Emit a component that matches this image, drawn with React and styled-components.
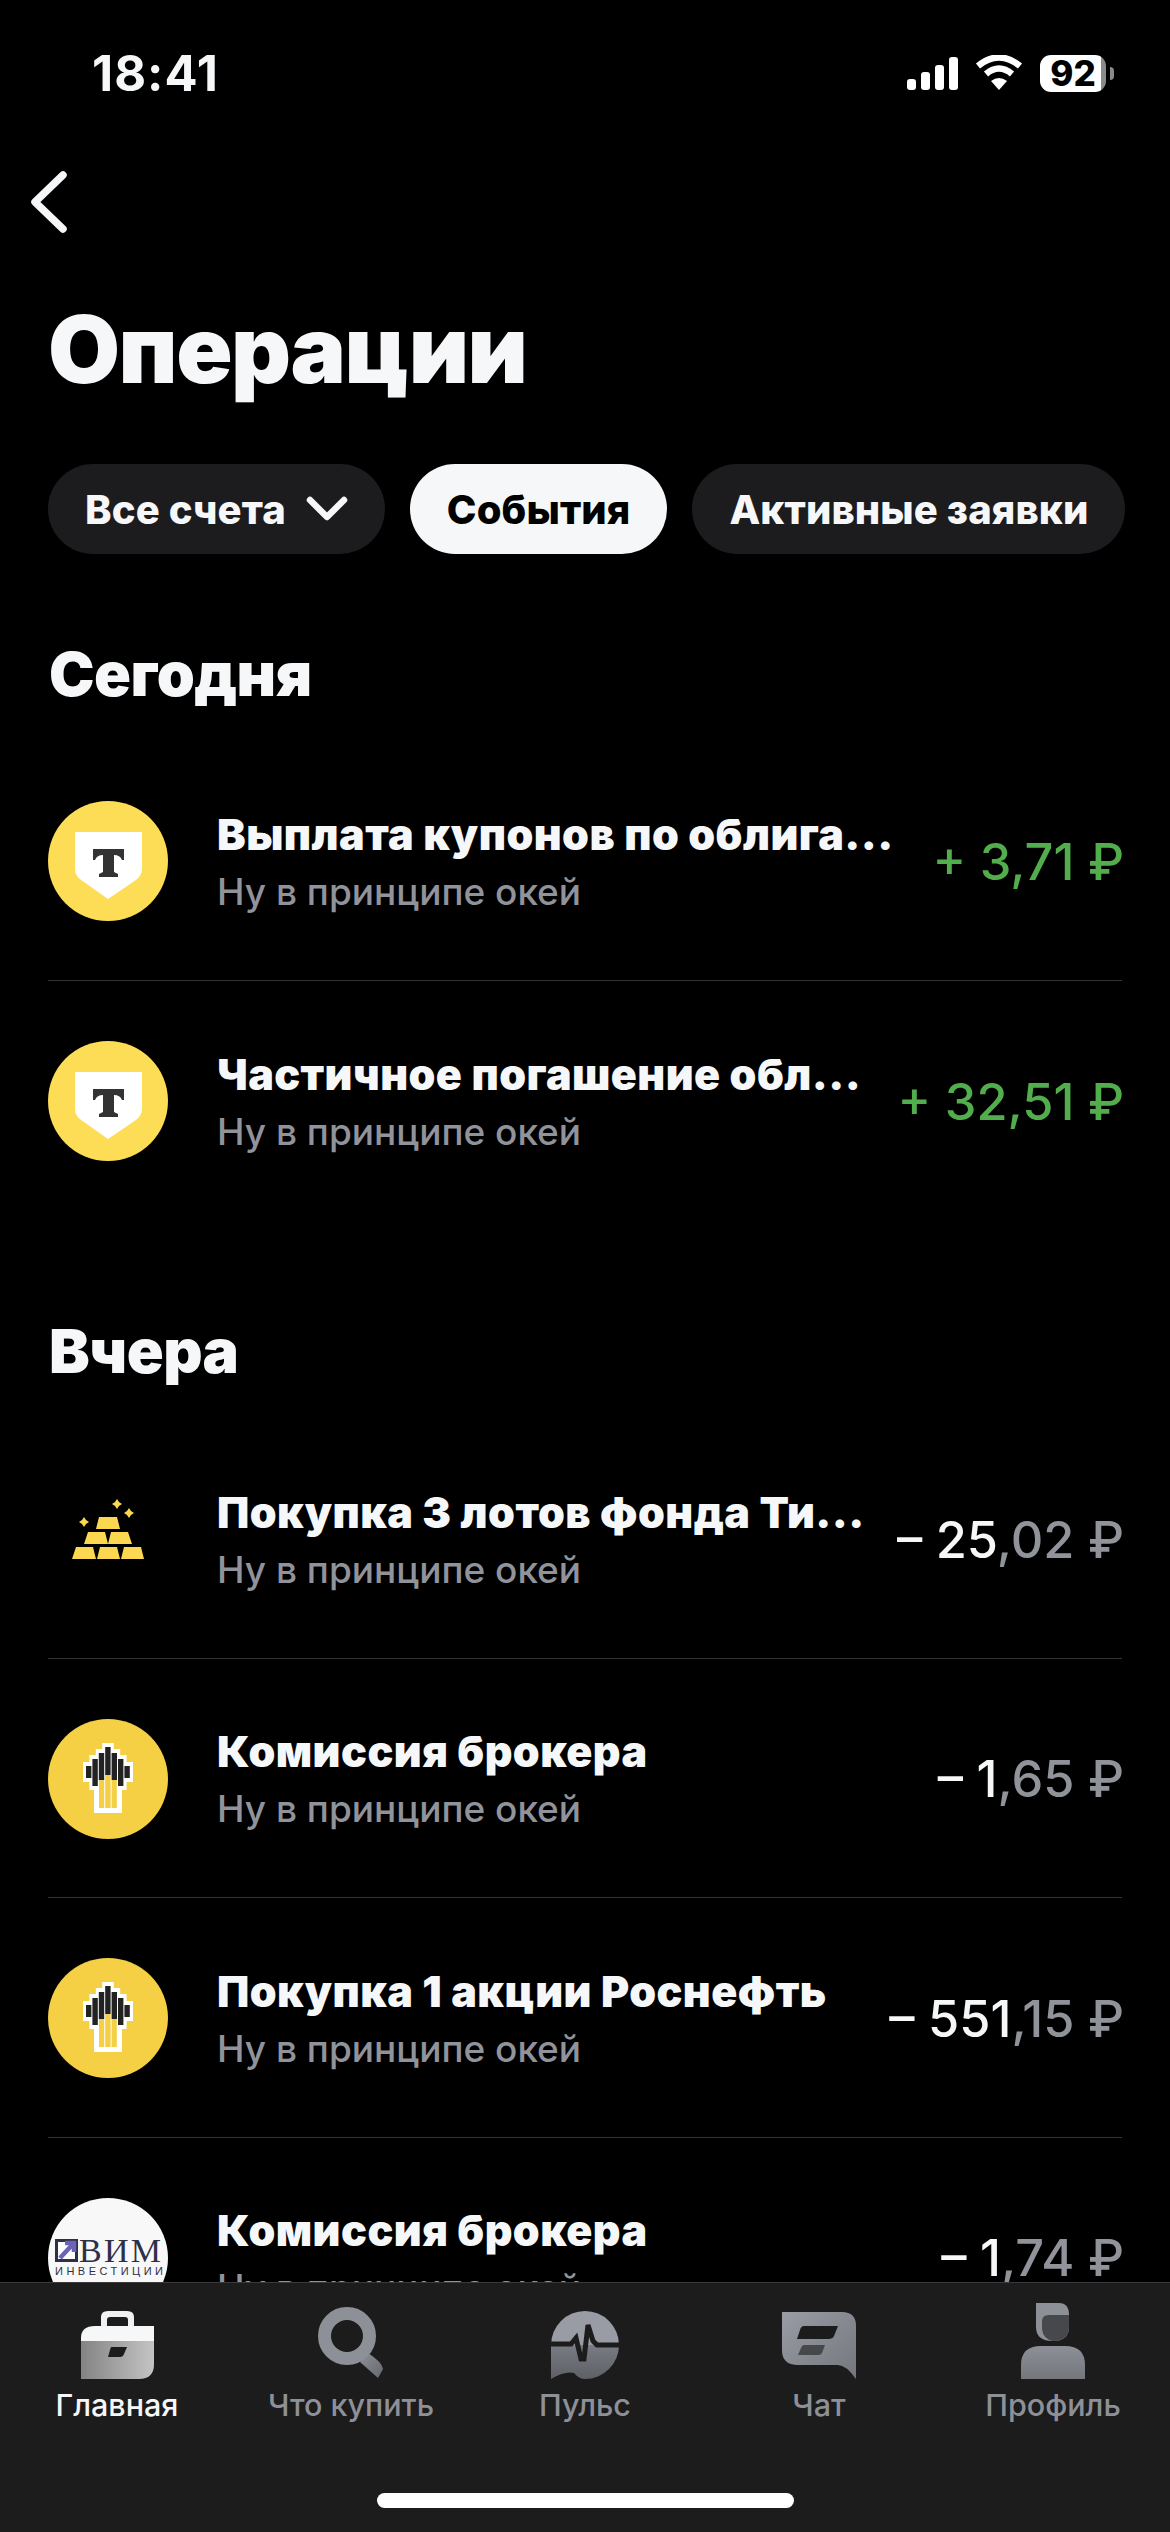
import React from 'react';
import styled, { createGlobalStyle } from 'styled-components';

const Global = createGlobalStyle`
  html, body {
    background: #000;
    margin: 0;
    padding: 0;
  }
`;

const Page = styled.div`
  background: #000;
  color: #f6f7f8;
  font-family: Inter, "Noto Sans", sans-serif;
  height: 2532px;
  overflow: hidden;
  position: relative;
  width: 1170px;
`;

const StatusBar = styled.div`
  align-items: center;
  display: flex;
  height: 146px;
  justify-content: space-between;
  padding: 0 64px 0 92px;
  box-sizing: border-box;
`;

const Time = styled.div`
  font-size: 49px;
  font-weight: 700;
  letter-spacing: 1px;
`;

const StatusIcons = styled.div`
  align-items: center;
  display: flex;
  gap: 17px;
`;

const Battery = styled.div`
  align-items: center;
  background: linear-gradient(90deg, #fff 93%, #8a8a8a 93%);
  border-radius: 11px;
  color: #000;
  display: flex;
  font-size: 35px;
  font-weight: 800;
  height: 37px;
  justify-content: center;
  position: relative;
  width: 66px;

  &::after {
    background: #8a8a8a;
    border-radius: 0 4px 4px 0;
    content: '';
    height: 13px;
    position: absolute;
    right: -8px;
    top: 12px;
    width: 4px;
  }
`;

const BackButton = styled.div`
  height: 64px;
  margin-left: 29px;
  margin-top: 24px;
  width: 40px;
`;

const Title = styled.h1`
  font-size: 93px;
  font-weight: 900;
  letter-spacing: -1.5px;
  line-height: 100px;
  margin: 65px 0 0 48px;
`;

const Pills = styled.div`
  display: flex;
  gap: 25px;
  margin: 65px 0 0 48px;
`;

const Pill = styled.div`
  align-items: center;
  background: ${({ $active }) => ($active ? '#f6f7f8' : '#1c1c1e')};
  border-radius: 45px;
  color: ${({ $active }) => ($active ? '#000' : '#f6f7f8')};
  display: flex;
  font-size: 40px;
  font-weight: 800;
  gap: 20px;
  height: 90px;
  letter-spacing: 0.12px;
  padding: 0 37px;
`;

const SectionTitle = styled.h2`
  font-size: 61px;
  font-weight: 900;
  letter-spacing: -0.5px;
  line-height: 70px;
  margin: ${({ $top }) => $top}px 0 0 49px;
`;

const List = styled.div`
  margin-top: ${({ $top }) => $top}px;
  padding: 0 48px;
`;

const Row = styled.div`
  align-items: center;
  border-bottom: ${({ $last }) => ($last ? 'none' : '1px solid #333336')};
  box-sizing: border-box;
  display: flex;
  height: 239.5px;
  padding-top: 2px;
`;

const Avatar = styled.div`
  background: ${({ $bg }) => $bg};
  border-radius: 50%;
  flex: none;
  height: 120px;
  overflow: hidden;
  width: 120px;

  svg {
    display: block;
  }
`;

const RowText = styled.div`
  flex: 1;
  margin-left: 49px;
  min-width: 0;
`;

const RowTitle = styled.div`
  font-size: 43px;
  font-weight: 900;
  letter-spacing: 0.45px;
  line-height: 52px;
  white-space: nowrap;
`;

const RowSub = styled.div`
  color: #91939b;
  font-size: 37px;
  font-weight: 500;
  line-height: 46px;
  margin-top: 9px;
  white-space: nowrap;
`;

const Amount = styled.div`
  color: ${({ $green }) => ($green ? '#52ae4d' : '#91939b')};
  flex: none;
  font-size: 50.5px;
  font-weight: 500;
  margin-right: -2px;
  white-space: nowrap;
`;

const Whole = styled.span`
  color: ${({ $green }) => ($green ? '#52ae4d' : '#f6f7f8')};
`;

const TabBar = styled.div`
  background: #1c1c1c;
  border-top: 1px solid #3a3a3c;
  bottom: 0;
  box-sizing: border-box;
  height: 250px;
  left: 0;
  position: absolute;
  right: 0;
`;

const Tabs = styled.div`
  display: grid;
  grid-template-columns: repeat(5, 234px);
`;

const Tab = styled.div`
  align-items: center;
  color: ${({ $active }) => ($active ? '#f6f7f8' : '#8e9098')};
  display: flex;
  flex-direction: column;
  font-size: 30.5px;
  font-weight: 500;
`;

const TabIcon = styled.div`
  align-items: flex-end;
  display: flex;
  height: 96px;
  justify-content: center;

  svg {
    display: block;
  }
`;

const TabLabel = styled.div`
  line-height: 40px;
  margin-top: 6px;
`;

const HomeBar = styled.div`
  background: #fff;
  border-radius: 8px;
  height: 15px;
  margin: 68px auto 0;
  width: 417px;
`;

const ShieldLogo = () => (
  <svg width="120" height="120" viewBox="0 0 120 120">
    <path d="M27 31 H94 V68 Q94 76 85 81 L60 98 L36 81 Q27 76 27 68Z" fill="#fff" />
    <path d="M45 48 H76 V59 H74 Q72 54 66 54 V71 L70 73 V76 H51 V73 L55 71 V54 Q49 54 47 59 H45Z" fill="#333" />
  </svg>
);

const GoldLogo = () => (
  <svg width="120" height="120" viewBox="0 0 120 120" fill="#fbd84f">
    <path d="M51 38 H69 L72 50 H48Z" />
    <path d="M40 53 H57 L60 65 H36Z" />
    <path d="M63 53 H80 L84 65 H60Z" />
    <path d="M28 68 H45 L48 80 H24Z" />
    <path d="M52 68 H69 L72 80 H49Z" />
    <path d="M76 68 H93 L96 80 H73Z" />
    <path d="M69 20 L71 23 L74 25 L71 27 L69 30 L67 27 L64 25 L67 23Z" />
    <path d="M81 29 L83 32 L86 34 L83 36 L81 39 L79 36 L76 34 L79 32Z" />
    <path d="M36 38 L38 41 L41 43 L38 45 L36 48 L34 45 L31 43 L34 41Z" />
  </svg>
);

const fingers = [
  { x: 38, top: 47, bottom: 59 },
  { x: 44.4, top: 40, bottom: 67 },
  { x: 50.8, top: 34, bottom: 61 },
  { x: 57.2, top: 28, bottom: 56 },
  { x: 63.6, top: 34, bottom: 61 },
  { x: 70, top: 40, bottom: 67 },
  { x: 76.4, top: 47, bottom: 59 },
];

const OilLogo = () => (
  <svg width="120" height="120" viewBox="0 0 120 120">
    {fingers.map(f => (
      <rect key={`w${f.x}`} x={f.x - 3} y={f.top - 4} width={11.6} height={f.bottom - f.top + 8} fill="#fff" />
    ))}
    <rect x="46" y="60" width="28" height="34" fill="#fff" />
    {fingers.map(f => (
      <rect key={f.x} x={f.x} y={f.top} width="5.4" height={f.bottom - f.top} fill="#222" />
    ))}
    <rect x="51" y="61" width="5.2" height="28" fill="#f5d045" />
    <rect x="57.2" y="56" width="5.4" height="33" fill="#f5d045" />
    <rect x="63.6" y="61" width="5.2" height="28" fill="#f5d045" />
  </svg>
);

const VimLogo = () => (
  <svg width="120" height="120" viewBox="0 0 120 120">
    <rect x="7" y="41" width="23" height="23" fill="#2f3046" />
    <rect x="10" y="44" width="17" height="17" fill="#fff" />
    <path d="M12 60 L25 46 M17 45 H26 V54" stroke="#6a63b8" strokeWidth="4.5" fill="none" />
    <text x="31" y="64" fontFamily="Liberation Serif" fontSize="34" fill="#2f3046" textLength="82">ВИМ</text>
    <text x="7" y="77" fontFamily="Liberation Sans" fontSize="11" fill="#2f3046" textLength="108">ИНВЕСТИЦИИ</text>
  </svg>
);

const BriefcaseIcon = () => (
  <svg width="73" height="68" viewBox="0 0 73 68">
    <defs>
      <linearGradient id="caseBody" x1="0" x2="1">
        <stop offset="0" stopColor="#838383" />
        <stop offset="1" stopColor="#c4c4c4" />
      </linearGradient>
    </defs>
    <path d="M20 15 V6 Q20 0 27 0 H46 Q53 0 53 6 V15 H47 V9 Q47 6 44 6 H29 Q26 6 26 9 V15Z" fill="#f0f0f0" />
    <path d="M0 30 V27 Q0 15 14 15 H73 V30Z" fill="#f6f7f8" />
    <path d="M0 30 H73 V53 Q73 68 58 68 H0Z" fill="url(#caseBody)" />
    <path d="M30 36 H46 L43 43 Q42 46 39 46 H27 L29 39Z" fill="#1c1c1c" />
  </svg>
);

const SearchIcon = () => (
  <svg width="66" height="72" viewBox="0 0 66 72">
    <defs>
      <linearGradient id="searchHandle" x1="0" y1="0" x2="1" y2="1">
        <stop offset="0" stopColor="#8e9098" />
        <stop offset="1" stopColor="#66686e" />
      </linearGradient>
    </defs>
    <path d="M42 55 L50 46 Q64 55 65 62 L60 71Z" fill="url(#searchHandle)" />
    <circle cx="29" cy="29" r="22.5" fill="none" stroke="#8e9098" strokeWidth="13" />
  </svg>
);

const PulseIcon = () => (
  <svg width="68" height="68" viewBox="0 0 68 68">
    <defs>
      <linearGradient id="pulseLow" x1="0" y1="0" x2="0" y2="1">
        <stop offset="0" stopColor="#7a7c83" />
        <stop offset="1" stopColor="#5e6066" />
      </linearGradient>
    </defs>
    <path d="M0 34 A34 34 0 0 1 68 34Z" fill="#999ba5" />
    <path d="M0 34 H68 A34 34 0 0 1 34 68 Q28 68 23 62 Q14 60 0 68Z" fill="url(#pulseLow)" />
    <path d="M0 33 H20 L25 27 L30 48 L33 48 L37 14 L42 30 L46 34 H68" fill="none" stroke="#1c1c1c" strokeWidth="5" />
  </svg>
);

const ChatIcon = () => (
  <svg width="74" height="67" viewBox="0 0 74 67">
    <defs>
      <linearGradient id="chatFill" x1="0" y1="0" x2="1" y2="1">
        <stop offset="0" stopColor="#9a9ca6" />
        <stop offset="1" stopColor="#74767c" />
      </linearGradient>
    </defs>
    <path d="M0 0 H60 Q74 0 74 14 V67 Q64 53 56 53 H16 Q0 53 0 38Z" fill="url(#chatFill)" />
    <path d="M22 14 H56 L52 24 Q51 27 46 27 H15 L18 18 Q19 14 22 14Z" fill="#1c1c1c" />
    <path d="M22 33 H43 L40 41 Q39 43 35 43 H16 L19 36 Q20 33 22 33Z" fill="#46484c" />
  </svg>
);

const ProfileIcon = () => (
  <svg width="64" height="76" viewBox="0 0 64 76">
    <defs>
      <linearGradient id="bodyFill" x1="0" y1="0" x2="0" y2="1">
        <stop offset="0" stopColor="#8e9098" />
        <stop offset="1" stopColor="#74767c" />
      </linearGradient>
    </defs>
    <path d="M15 0 H38 Q48 0 48 12 V24 Q48 38 32 38 Q15 38 15 24Z" fill="#8e9098" />
    <path d="M21 26 V18 Q21 12 28 12 H48 V24 Q48 38 32 38 Q22 36 21 26Z" fill="#46484c" />
    <path d="M0 76 V62 Q0 43 20 43 H44 Q64 43 64 62 V76Z" fill="url(#bodyFill)" />
  </svg>
);

const logos = {
  shield: { bg: '#fddc56', Logo: ShieldLogo },
  gold: { bg: 'transparent', Logo: GoldLogo },
  oil: { bg: '#f5d045', Logo: OilLogo },
  vim: { bg: '#f8f8f8', Logo: VimLogo },
};

const today = [
  { id: 1, logo: 'shield', title: 'Выплата купонов по облига...', sign: '+ ', whole: '3,71 ₽', frac: '', green: true },
  { id: 2, logo: 'shield', title: 'Частичное погашение обл...', sign: '+ ', whole: '32,51 ₽', frac: '', green: true },
];

const yesterday = [
  { id: 3, logo: 'gold', title: 'Покупка 3 лотов фонда Ти...', sign: '– ', whole: '25', frac: ',02 ₽' },
  { id: 4, logo: 'oil', title: 'Комиссия брокера', sign: '– ', whole: '1', frac: ',65 ₽' },
  { id: 5, logo: 'oil', title: 'Покупка 1 акции Роснефть', sign: '– ', whole: '551', frac: ',15 ₽' },
  { id: 6, logo: 'vim', title: 'Комиссия брокера', sign: '– ', whole: '1', frac: ',74 ₽' },
];

const tabs = [
  { label: 'Главная', Icon: BriefcaseIcon, active: true },
  { label: 'Что купить', Icon: SearchIcon },
  { label: 'Пульс', Icon: PulseIcon },
  { label: 'Чат', Icon: ChatIcon },
  { label: 'Профиль', Icon: ProfileIcon },
];

function Operation({ item, last }) {
  const { bg, Logo } = logos[item.logo];
  return (
    <Row $last={last}>
      <Avatar $bg={bg}><Logo /></Avatar>
      <RowText>
        <RowTitle>{item.title}</RowTitle>
        <RowSub>Ну в принципе окей</RowSub>
      </RowText>
      <Amount $green={item.green}>
        <Whole $green={item.green}>{item.sign}{item.whole}</Whole>{item.frac}
      </Amount>
    </Row>
  );
}

export default function App() {
  return (
    <Page>
      <Global />
      <StatusBar>
        <Time>18:41</Time>
        <StatusIcons>
          <svg width="51" height="33" viewBox="0 0 51 33" fill="#fff">
            <rect x="0" y="22" width="9" height="11" rx="3" />
            <rect x="14" y="15" width="9" height="18" rx="3" />
            <rect x="28" y="8" width="9" height="25" rx="3" />
            <rect x="42" y="0" width="9" height="33" rx="3" />
          </svg>
          <svg width="48" height="36" viewBox="0 0 48 36">
            <path d="M3 11 Q24 -6 45 11 M11 19 Q24 8 37 19" fill="none" stroke="#fff" strokeWidth="6.5" />
            <path d="M16 26 Q24 20 32 26 L24 35Z" fill="#fff" />
          </svg>
          <Battery>92</Battery>
        </StatusIcons>
      </StatusBar>

      <BackButton>
        <svg width="40" height="64" viewBox="0 0 40 64">
          <path d="M34 5 L6 32 L34 59" fill="none" stroke="#f6f7f8" strokeWidth="7.5" strokeLinecap="round" strokeLinejoin="round" />
        </svg>
      </BackButton>

      <Title>Операции</Title>

      <Pills>
        <Pill>
          Все счета
          <svg width="42" height="26" viewBox="0 0 42 26">
            <path d="M4 4 L21 21 L38 4" fill="none" stroke="#f6f7f8" strokeWidth="6.5" strokeLinecap="round" strokeLinejoin="round" />
          </svg>
        </Pill>
        <Pill $active>События</Pill>
        <Pill>Активные заявки</Pill>
      </Pills>

      <SectionTitle $top={85}>Сегодня</SectionTitle>
      <List $top={32}>
        {today.map((item, i) => <Operation key={item.id} item={item} last={i === today.length - 1} />)}
      </List>

      <SectionTitle $top={96}>Вчера</SectionTitle>
      <List $top={33}>
        {yesterday.map(item => <Operation key={item.id} item={item} />)}
      </List>

      <TabBar>
        <Tabs>
          {tabs.map(({ label, Icon, active }) => (
            <Tab key={label} $active={active}>
              <TabIcon><Icon /></TabIcon>
              <TabLabel>{label}</TabLabel>
            </Tab>
          ))}
        </Tabs>
        <HomeBar />
      </TabBar>
    </Page>
  );
}
